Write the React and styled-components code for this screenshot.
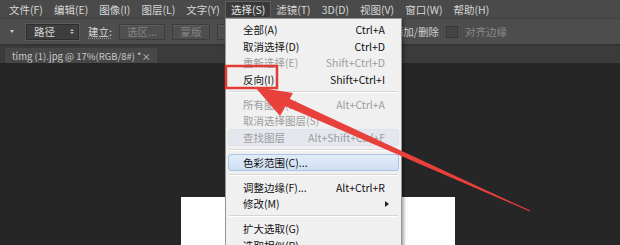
import React from 'react';
import styled, { createGlobalStyle } from 'styled-components';

const GlobalStyle = createGlobalStyle`
  html, body {
    margin: 0;
    padding: 0;
    background: #262626;
    overflow: hidden;
  }
  body {
    font-family: "Noto Sans CJK SC", "Noto Sans", sans-serif;
  }
`;

const Screen = styled.div`
  position: relative;
  width: 620px;
  height: 245px;
  display: flex;
  flex-direction: column;
  overflow: hidden;
  background: #262626;
`;

const MenuBar = styled.div`
  flex-shrink: 0;
  height: 18px;
  display: flex;
  align-items: stretch;
  padding-left: 3.5px;
  background: #4a4a4a;
`;

const MenuTitle = styled.div`
  display: flex;
  align-items: center;
  padding: 0 5.5px;
  font-size: 10.5px;
  color: ${(p) => (p.open ? '#e8e8e8' : '#d6d6d6')};
  background: ${(p) => (p.open ? '#3a3a3a' : 'transparent')};
  box-shadow: ${(p) => (p.open ? 'inset 0 0 0 1px #5e5e5e' : 'none')};
  margin-top: 1px;
`;

const Toolbar = styled.div`
  flex-shrink: 0;
  height: 26px;
  display: flex;
  align-items: center;
  gap: 7px;
  background: #4d4d4d;
  border-top: 1px solid #404040;
  box-sizing: border-box;
  font-size: 10.5px;
  color: #d0d0d0;
  white-space: nowrap;
`;

const PresetArrow = styled.div`
  width: 14px;
  display: flex;
  align-items: center;
  justify-content: flex-end;
  &::after {
    content: '';
    border-top: 3px solid #cfcfcf;
    border-left: 2.5px solid transparent;
    border-right: 2.5px solid transparent;
  }
`;

const Select = styled.div`
  width: 53px;
  height: 16px;
  box-sizing: border-box;
  margin-left: 5px;
  padding: 0 4px 0 7px;
  display: flex;
  align-items: center;
  justify-content: space-between;
  background: #3e3e3e;
  border: 1px solid #2e2e2e;
  box-shadow: 0 0 0 1px #5a5a5a;
  color: #d8d8d8;
`;

const Spin = styled.span`
  display: flex;
  flex-direction: column;
  gap: 1px;
  &::before,
  &::after {
    content: '';
    border-left: 2px solid transparent;
    border-right: 2px solid transparent;
  }
  &::before {
    border-bottom: 2.5px solid #bdbdbd;
  }
  &::after {
    border-top: 2.5px solid #bdbdbd;
  }
`;

const Label = styled.span`
  margin-left: 2px;
  color: #d8d8d8;
  text-decoration: underline dotted #999;
  text-underline-offset: 2px;
`;

const ToolButton = styled.div`
  width: ${(p) => p.w}px;
  height: 16px;
  box-sizing: border-box;
  display: flex;
  align-items: center;
  justify-content: center;
  background: #4f4f4f;
  border: 1px solid #3c3c3c;
  box-shadow: inset 0 1px 0 #5c5c5c;
  color: #858585;
`;

const ToolRight = styled.div`
  margin-left: auto;
  margin-right: 113px;
  display: flex;
  align-items: center;
  gap: 7px;
`;

const Check = styled.span`
  width: 10px;
  height: 10px;
  background: #454545;
  border: 1px solid #363636;
`;

const Dim = styled.span`
  color: #8a8a8a;
`;

const TabBar = styled.div`
  flex-shrink: 0;
  height: 19px;
  display: flex;
  align-items: flex-end;
  padding-left: 5px;
  background: #3b3b3b;
  border-top: 2px solid #333;
  box-sizing: border-box;
`;

const Tab = styled.div`
  height: 15px;
  width: 152px;
  box-sizing: border-box;
  padding: 0 6px 0 7px;
  display: flex;
  align-items: center;
  justify-content: space-between;
  background: #474747;
  font-size: 9.5px;
  color: #c9c9c9;
  white-space: nowrap;
`;

const Workspace = styled.div`
  flex: 1;
  min-height: 0;
  overflow: hidden;
  padding: 134px 0 0 181px;
  background: #262626;
`;

const Canvas = styled.div`
  width: 274px;
  height: 60px;
  background: #ffffff;
`;

const Dropdown = styled.div`
  position: absolute;
  left: 225px;
  top: 18px;
  width: 177px;
  height: 240px;
  box-sizing: border-box;
  padding: 2px 2px 0;
  background: #f0f0f0;
  border: 1px solid #979797;
  box-shadow: 2px 2px 3px rgba(0, 0, 0, 0.35);
  font-size: 10.5px;
  white-space: nowrap;
`;

const Row = styled.div`
  height: 16.7px;
  box-sizing: border-box;
  display: grid;
  grid-template-columns: 1fr auto;
  align-items: center;
  padding: 0 13px 0 14px;
  color: ${(p) => (p.disabled ? '#9d9d9d' : '#111')};
  border-radius: 3px;
  border: 1px solid
    ${(p) => (p.hot ? '#a8c4e8' : p.soft ? '#dde2ea' : 'transparent')};
  background: ${(p) =>
    p.hot
      ? 'linear-gradient(#e3edf9, #cfdff3)'
      : p.soft
      ? '#e4e8ee'
      : 'transparent'};
`;

const Key = styled.span`
  text-align: right;
`;

const SubArrow = styled.span`
  width: 0;
  height: 0;
  margin-right: -8px;
  border-left: 4px solid #222;
  border-top: 3.5px solid transparent;
  border-bottom: 3.5px solid transparent;
`;

const Separator = styled.div`
  height: 8px;
  display: flex;
  align-items: center;
  padding: 0 1px;
  &::before {
    content: '';
    flex: 1;
    height: 1px;
    background: #d6d6d6;
    border-bottom: 1px solid #ffffff;
  }
`;

const Overlay = styled.svg`
  position: absolute;
  left: 0;
  top: 0;
  pointer-events: none;
`;

const menus = ['文件(F)', '编辑(E)', '图像(I)', '图层(L)', '文字(Y)', '选择(S)', '滤镜(T)', '3D(D)', '视图(V)', '窗口(W)', '帮助(H)'];

const items = [
  { label: '全部(A)', key: 'Ctrl+A' },
  { label: '取消选择(D)', key: 'Ctrl+D' },
  { label: '重新选择(E)', key: 'Shift+Ctrl+D', disabled: true },
  { label: '反向(I)', key: 'Shift+Ctrl+I' },
  'sep',
  { label: '所有图层(L)', key: 'Alt+Ctrl+A', disabled: true },
  { label: '取消选择图层(S)', key: '', disabled: true },
  { label: '查找图层', key: 'Alt+Shift+Ctrl+F', disabled: true, soft: true },
  'sep',
  { label: '色彩范围(C)...', key: '', hot: true },
  'sep',
  { label: '调整边缘(F)...', key: 'Alt+Ctrl+R' },
  { label: '修改(M)', sub: true },
  'sep',
  { label: '扩大选取(G)', key: '' },
  { label: '选取相似(R)', key: '' },
];

const App = () => {
  return (
    <>
      <GlobalStyle />
      <Screen>
        <MenuBar>
          {menus.map((m) => (
            <MenuTitle key={m} open={m === '选择(S)'}>
              {m}
            </MenuTitle>
          ))}
        </MenuBar>

        <Toolbar>
          <PresetArrow />
          <Select>
            路径
            <Spin />
          </Select>
          <Label>建立:</Label>
          <ToolButton w={46}>选区...</ToolButton>
          <ToolButton w={38}>蒙版</ToolButton>
          <ToolButton w={40} />
          <ToolRight>
            <span>添加/删除</span>
            <Check />
            <Dim>对齐边缘</Dim>
          </ToolRight>
        </Toolbar>

        <TabBar>
          <Tab>
            <span>timg (1).jpg @ 17%(RGB/8#) *</span>
            <span>×</span>
          </Tab>
        </TabBar>

        <Workspace>
          <Canvas />
        </Workspace>

        <Dropdown>
          {items.map((it, i) =>
            it === 'sep' ? (
              <Separator key={i} />
            ) : (
              <Row key={i} disabled={it.disabled} hot={it.hot} soft={it.soft}>
                <span>{it.label}</span>
                {it.sub ? <SubArrow /> : <Key>{it.key}</Key>}
              </Row>
            )
          )}
        </Dropdown>

        <Overlay width="620" height="245" viewBox="0 0 620 245">
          <rect x="226" y="66" width="51" height="22" fill="none" stroke="#e23b36" strokeWidth="2.5" />
          <polygon points="280.4,104 283.6,96 530.2,210.6 529.8,211.4" fill="#e8403a" />
          <polygon points="255,87 293,93 280,116" fill="#e8403a" />
        </Overlay>
      </Screen>
    </>
  );
};

export default App;
